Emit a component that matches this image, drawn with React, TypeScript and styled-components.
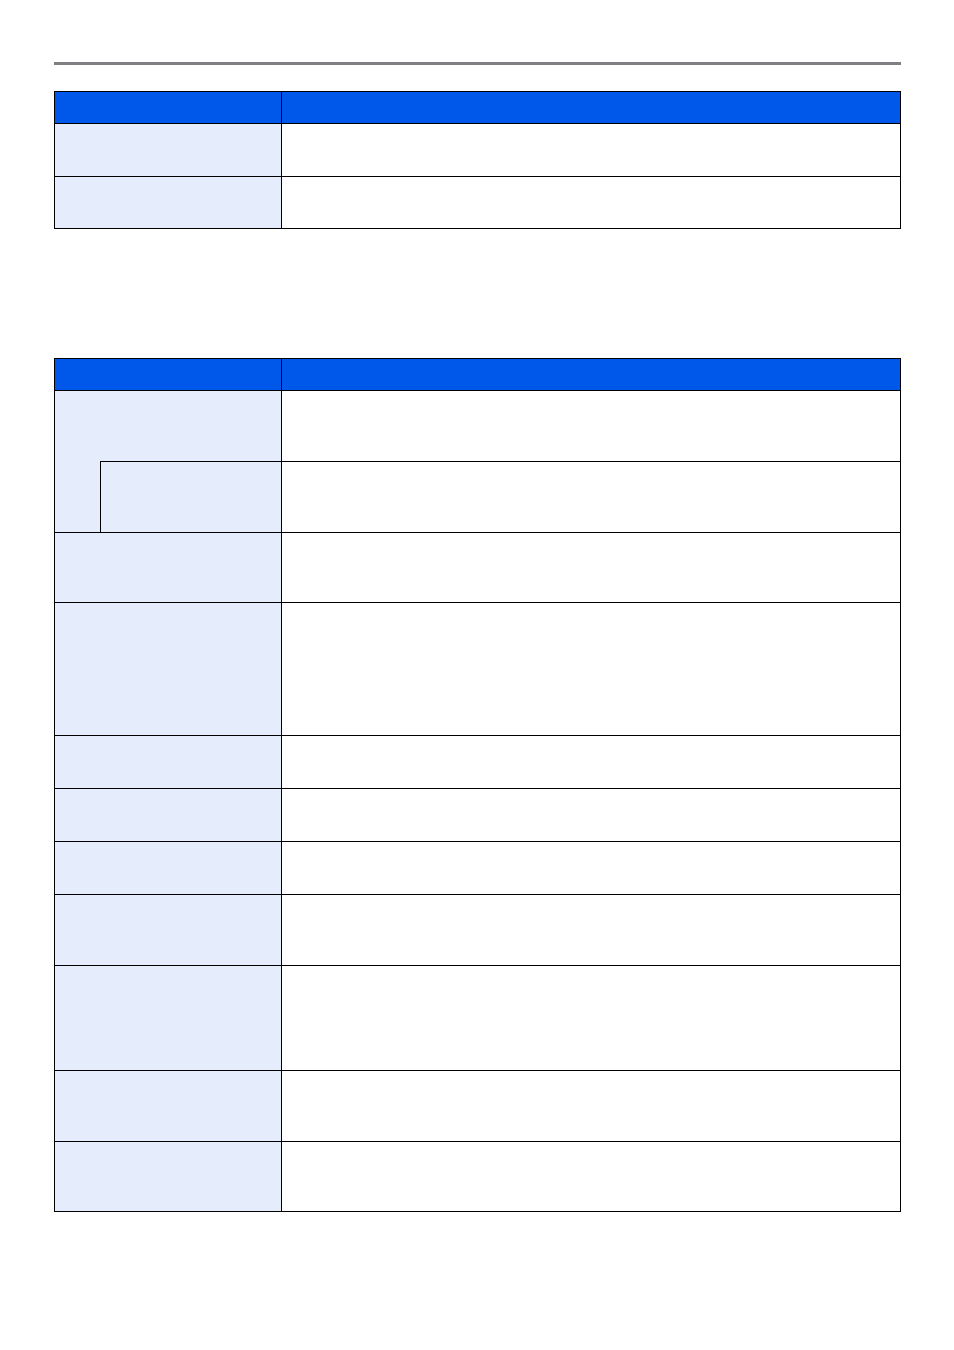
import React from "react";
import styled, { createGlobalStyle } from "styled-components";

const GlobalStyle = createGlobalStyle`
  body {
    margin: 0;
    background: #ffffff;
    font-family: "Liberation Sans", Arial, sans-serif;
  }
`;

const Page = styled.div`
  width: 954px;
  padding: 62px 53px 0 54px;
  box-sizing: border-box;
`;

const Rule = styled.div`
  height: 3px;
  background: #808084;
`;

const Table = styled.table<{ $gap: number }>`
  width: 847px;
  margin-top: ${(p) => p.$gap}px;
  border-collapse: collapse;
  table-layout: fixed;
`;

const HeadCell = styled.th`
  background: #0058ea;
  border: 1px solid #000;
  padding: 0;
`;

const KeyCell = styled.td`
  background: #e5ecfc;
  border: 1px solid #000;
  padding: 0;
`;

const ValueCell = styled.td`
  background: #fff;
  border: 1px solid #000;
  padding: 0;
`;

const Row = styled.tr<{ $h: number }>`
  height: ${(p) => p.$h}px;
`;

const firstRows = [53, 52];
const secondRows = [70, 133, 53, 53, 53, 71, 105, 71, 70];

export default function App() {
  return (
    <>
      <GlobalStyle />
      <Page>
        <Rule />
        <Table $gap={26}>
          <colgroup>
            <col style={{ width: 227 }} />
            <col />
          </colgroup>
          <tbody>
            <Row $h={32}>
              <HeadCell />
              <HeadCell />
            </Row>
            {firstRows.map((h, i) => (
              <Row $h={h} key={i}>
                <KeyCell />
                <ValueCell />
              </Row>
            ))}
          </tbody>
        </Table>

        <Table $gap={129}>
          <colgroup>
            <col style={{ width: 46 }} />
            <col style={{ width: 181 }} />
            <col />
          </colgroup>
          <tbody>
            <Row $h={32}>
              <HeadCell colSpan={2} />
              <HeadCell />
            </Row>
            <Row $h={71}>
              <KeyCell colSpan={2} style={{ borderBottom: "none" }} />
              <ValueCell />
            </Row>
            <Row $h={71}>
              <KeyCell style={{ borderTop: "none" }} />
              <KeyCell />
              <ValueCell />
            </Row>
            {secondRows.map((h, i) => (
              <Row $h={h} key={i}>
                <KeyCell colSpan={2} />
                <ValueCell />
              </Row>
            ))}
          </tbody>
        </Table>
      </Page>
    </>
  );
}
